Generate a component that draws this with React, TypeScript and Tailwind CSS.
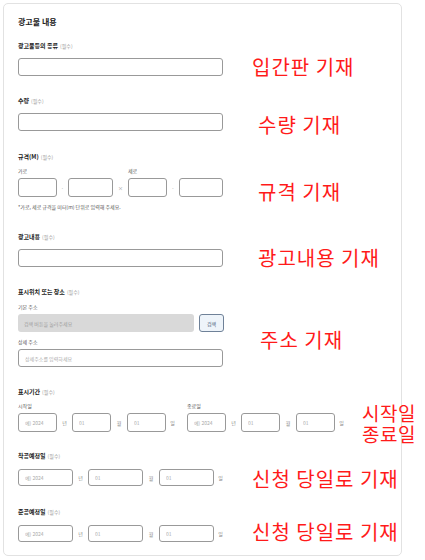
import React from "react";

const font = { fontFamily: '"Noto Sans CJK KR", "Noto Sans", sans-serif' };

const Label = ({ text, className = "" }: { text: string; className?: string }) => (
  <div className={`h-[8px] leading-[8px] text-[6px] font-bold text-[#222] ${className}`}>
    {text}
    <span className="ml-[2px] text-[5px] font-normal text-[#9a9a9a]">(필수)</span>
  </div>
);

const Sub = ({ text, className = "" }: { text: string; className?: string }) => (
  <div className={`h-[6px] leading-[6px] text-[5px] text-[#555] ${className}`}>{text}</div>
);

const Box = ({ w, h, placeholder = "" }: { w: string; h: string; placeholder?: string }) => (
  <input
    placeholder={placeholder}
    className={`block ${w} ${h} shrink-0 border border-[#999] rounded-[3px] bg-white px-[6px] text-[5px] text-[#333] placeholder:text-[#aaa] outline-none`}
  />
);

const Unit = ({ text, w }: { text: string; w: string }) => (
  <span className={`${w} shrink-0 text-center text-[5px] text-[#888]`}>{text}</span>
);

const Note = ({ children, className }: { children: React.ReactNode; className: string }) => (
  <div className={`absolute text-[#ff1a1a] whitespace-nowrap ${className}`}>{children}</div>
);

const DateRow = ({ w, h }: { w: string; h: string }) => (
  <div className="flex items-center">
    <Box w={w} h={h} placeholder="예) 2024" />
    <Unit text="년" w="w-[15px]" />
    <Box w={w} h={h} placeholder="01" />
    <Unit text="월" w="w-[16px]" />
    <Box w={w} h={h} placeholder="01" />
    <Unit text="일" w="w-[13px]" />
  </div>
);

export default function App() {
  return (
    <div className="relative w-[425px] h-[560px] bg-white overflow-hidden leading-none" style={font}>
      <div className="ml-[3px] mt-[3px] w-[399px] h-[553px] border border-[#e2e2e2] rounded-[5px] pl-[14px] pt-[13px]">
        <div className="h-[10px] leading-[10px] text-[8px] font-bold text-[#222]">광고물 내용</div>

        <Label text="광고물등의 종류" className="mt-[15px]" />
        <div className="mt-[8px]">
          <Box w="w-[205px]" h="h-[18px]" />
        </div>

        <Label text="수량" className="mt-[21px]" />
        <div className="mt-[8px]">
          <Box w="w-[205px]" h="h-[18px]" />
        </div>

        <Label text="규격(M)" className="mt-[22px]" />
        <div className="mt-[7px] flex">
          <Sub text="가로" className="w-[110px]" />
          <Sub text="세로" />
        </div>
        <div className="mt-[4px] flex items-center">
          <Box w="w-[39px]" h="h-[19px]" />
          <Unit text="·" w="w-[11px]" />
          <Box w="w-[45px]" h="h-[19px]" />
          <Unit text="×" w="w-[15px]" />
          <Box w="w-[39px]" h="h-[19px]" />
          <Unit text="·" w="w-[12px]" />
          <Box w="w-[44px]" h="h-[19px]" />
        </div>
        <div className="mt-[7px] h-[6px] leading-[6px] text-[5px] text-[#555]">
          *가로, 세로 규격을 미터(m) 단위로 입력해 주세요.
        </div>

        <Label text="광고내용" className="mt-[23px]" />
        <div className="mt-[8px]">
          <Box w="w-[205px]" h="h-[18px]" />
        </div>

        <Label text="표시위치 또는 장소" className="mt-[21px]" />
        <Sub text="기본 주소" className="mt-[8px]" />
        <div className="mt-[4px] flex gap-[5px]">
          <div className="w-[176px] h-[18px] rounded-[3px] bg-[#d9d9d9] pl-[6px] flex items-center text-[5px] text-[#9d9d9d]">
            검색 버튼을 눌러주세요
          </div>
          <button className="w-[25px] h-[18px] rounded-[3px] border border-[#6f8198] bg-[#eef4fa] text-[5px] text-[#4a5d78]">
            검색
          </button>
        </div>
        <Sub text="상세 주소" className="mt-[7px]" />
        <div className="mt-[4px]">
          <Box w="w-[205px]" h="h-[18px]" placeholder="상세주소를 입력하세요" />
        </div>

        <Label text="표시기간" className="mt-[21px]" />
        <div className="mt-[7px] flex">
          <Sub text="시작일" className="w-[169px]" />
          <Sub text="종료일" />
        </div>
        <div className="mt-[4px] flex items-center">
          <div className="w-[169px]">
            <DateRow w="w-[39px]" h="h-[19px]" />
          </div>
          <DateRow w="w-[39px]" h="h-[19px]" />
        </div>

        <Label text="착공예정일" className="mt-[20px]" />
        <div className="mt-[9px]">
          <DateRow w="w-[55px]" h="h-[17px]" />
        </div>

        <Label text="준공예정일" className="mt-[22px]" />
        <div className="mt-[9px]">
          <DateRow w="w-[55px]" h="h-[17px]" />
        </div>
      </div>

      <Note className="left-[252px] top-[57px] text-[20px] leading-[20px] tracking-[1px]">입간판 기재</Note>
      <Note className="left-[258px] top-[115px] text-[20px] leading-[20px] tracking-[1px]">수량 기재</Note>
      <Note className="left-[258px] top-[182px] text-[20px] leading-[20px] tracking-[1px]">규격 기재</Note>
      <Note className="left-[258px] top-[248px] text-[20px] leading-[20px] tracking-[1px]">광고내용 기재</Note>
      <Note className="left-[260px] top-[330px] text-[20px] leading-[20px] tracking-[1px]">주소 기재</Note>
      <Note className="left-[362px] top-[402px] text-[19px] leading-[21px] tracking-[0.5px]">
        시작일
        <br />
        종료일
      </Note>
      <Note className="left-[252px] top-[469px] text-[20px] leading-[20px] tracking-[1px]">신청 당일로 기재</Note>
      <Note className="left-[252px] top-[522px] text-[20px] leading-[20px] tracking-[1px]">신청 당일로 기재</Note>
    </div>
  );
}
